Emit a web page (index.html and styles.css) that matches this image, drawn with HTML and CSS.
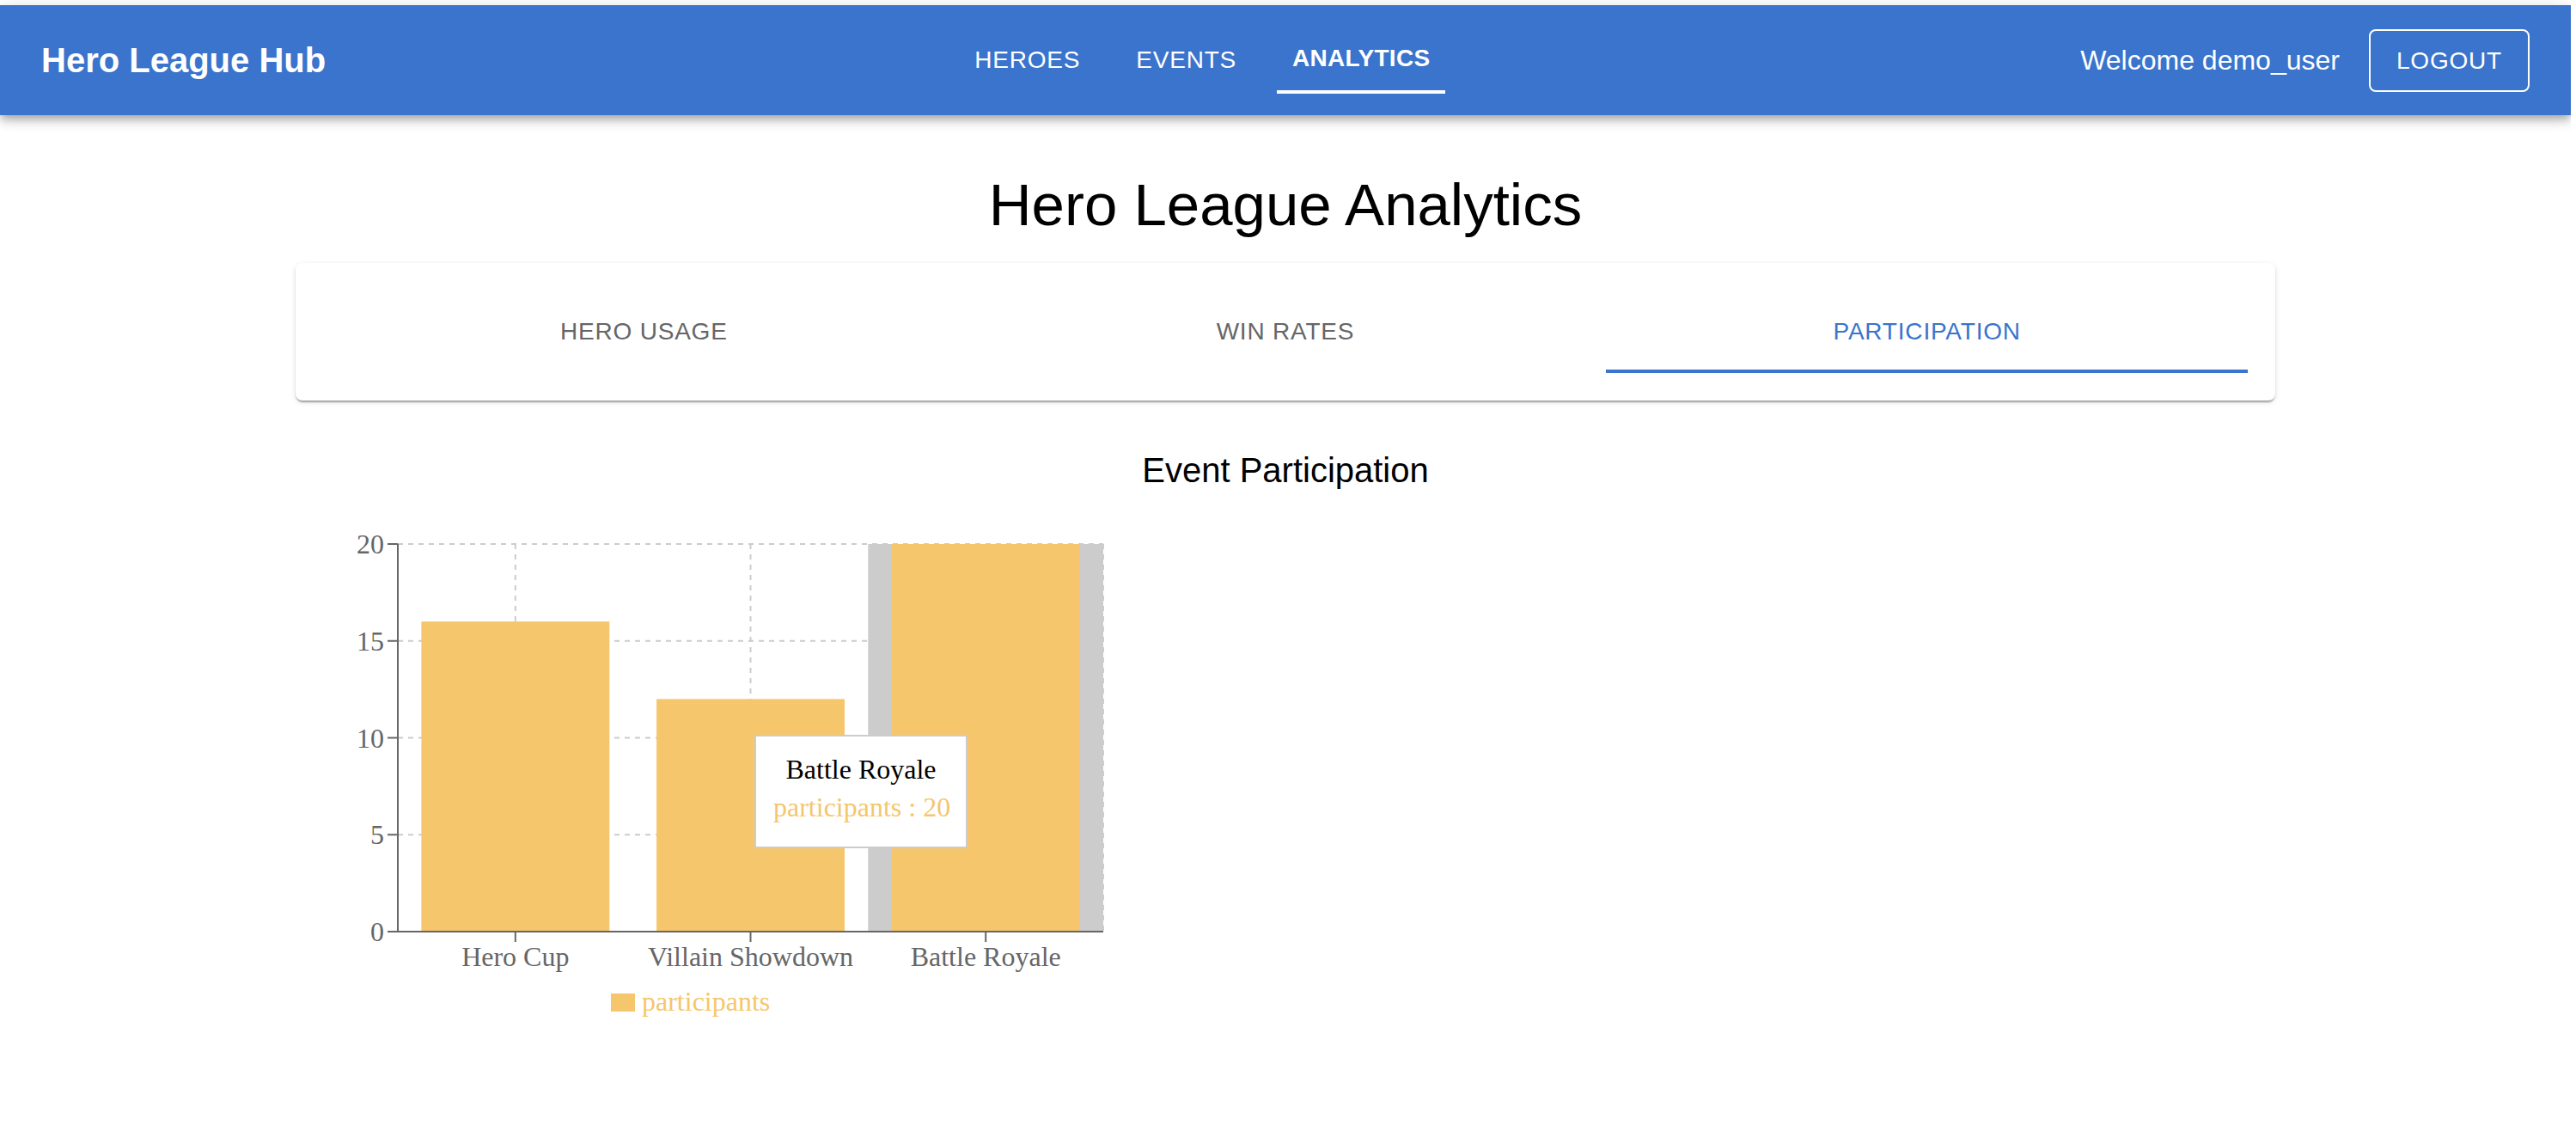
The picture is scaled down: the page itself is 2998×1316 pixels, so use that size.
FILE: index.html
```html
<!DOCTYPE html>
<html lang="en">
<head>
<meta charset="utf-8">
<title>Hero League Hub</title>
<link rel="stylesheet" href="styles.css">
</head>
<body>
<header class="appbar">
  <div class="brand">Hero League Hub</div>
  <nav class="nav">
    <a class="nav-item">HEROES</a>
    <a class="nav-item">EVENTS</a>
    <a class="nav-item active">ANALYTICS</a>
  </nav>
  <div class="spacer"></div>
  <span class="welcome">Welcome demo_user</span>
  <button class="logout">LOGOUT</button>
</header>

<main class="container">
  <h1 class="title">Hero League Analytics</h1>
  <div class="tabs-card">
    <div class="tabs">
      <div class="tab">HERO USAGE</div>
      <div class="tab">WIN RATES</div>
      <div class="tab active">PARTICIPATION</div>
    </div>
  </div>

  <h2 class="chart-title">Event Participation</h2>

  <div class="chart">
    <svg class="chart-svg" width="960" height="600" viewBox="0 0 960 600">
      <g class="grid">
        <line x1="119" y1="31" x2="940" y2="31"/>
        <line x1="119" y1="143.75" x2="940" y2="143.75"/>
        <line x1="119" y1="256.5" x2="940" y2="256.5"/>
        <line x1="119" y1="369.25" x2="940" y2="369.25"/>
        <line x1="255.8" y1="31" x2="255.8" y2="482"/>
        <line x1="529.5" y1="31" x2="529.5" y2="482"/>
        <line x1="803.2" y1="31" x2="803.2" y2="482"/>
      </g>
      <rect class="cursor" x="666.3" y="31" width="273.7" height="451"/>
      <g class="grid">
        <line x1="940" y1="31" x2="940" y2="482"/>
      </g>
      <g class="bars">
        <rect x="146.4" y="121.2" width="218.9" height="360.8"/>
        <rect x="420.1" y="211.4" width="218.9" height="270.6"/>
        <rect x="693.7" y="31" width="218.9" height="451"/>
      </g>
      <g class="axis">
        <line x1="119" y1="31" x2="119" y2="483"/>
        <line x1="118" y1="482" x2="940" y2="482"/>
        <line x1="107" y1="31" x2="119" y2="31"/>
        <line x1="107" y1="143.75" x2="119" y2="143.75"/>
        <line x1="107" y1="256.5" x2="119" y2="256.5"/>
        <line x1="107" y1="369.25" x2="119" y2="369.25"/>
        <line x1="107" y1="482" x2="119" y2="482"/>
        <line x1="255.8" y1="482" x2="255.8" y2="494"/>
        <line x1="529.5" y1="482" x2="529.5" y2="494"/>
        <line x1="803.2" y1="482" x2="803.2" y2="494"/>
      </g>
      <g class="ticks ticks-y">
        <text x="103" y="42">20</text>
        <text x="103" y="155">15</text>
        <text x="103" y="268">10</text>
        <text x="103" y="380">5</text>
        <text x="103" y="493">0</text>
      </g>
      <g class="ticks ticks-x">
        <text x="255.8" y="522">Hero Cup</text>
        <text x="529.5" y="522">Villain Showdown</text>
        <text x="803.2" y="522">Battle Royale</text>
      </g>
      <g class="legend">
        <rect x="367" y="554" width="28" height="21"/>
        <text x="403" y="574">participants</text>
      </g>
    </svg>
    <div class="tooltip">
      <p class="tooltip-label">Battle Royale</p>
      <p class="tooltip-item">participants : 20</p>
    </div>
  </div>
</main>
</body>
</html>
```

FILE: styles.css
```css
html, body {
  margin: 0;
  padding: 0;
  background: #ffffff;
}

body {
  padding-top: 6px;
  width: 2992px;
  font-family: "Liberation Sans", Arial, sans-serif;
  color: #000;
}

.appbar {
  height: 128px;
  box-sizing: border-box;
  padding: 0 48px;
  background: #3a74cc;
  color: #ffffff;
  display: flex;
  align-items: center;
  box-shadow: 0 4px 8px -2px rgba(0,0,0,0.2), 0 8px 10px 0 rgba(0,0,0,0.14), 0 2px 20px 0 rgba(0,0,0,0.12);
  position: relative;
  z-index: 2;
}

.brand {
  font-size: 40px;
  font-weight: 700;
  line-height: 1.6;
  white-space: nowrap;
}

.nav {
  display: flex;
  gap: 29px;
  margin-left: 737px;
}

.nav-item {
  position: relative;
  height: 78px;
  padding: 0 18px;
  display: flex;
  align-items: center;
  font-size: 28px;
  letter-spacing: 0.8px;
  color: #ffffff;
  white-space: nowrap;
}

.nav-item.active {
  font-weight: 700;
  letter-spacing: 0.3px;
  padding-bottom: 4px;
  height: 74px;
}

.nav-item.active::after {
  content: "";
  position: absolute;
  left: 0;
  right: 0;
  bottom: 0;
  height: 4px;
  background: #ffffff;
}

.spacer {
  flex: 1;
}

.welcome {
  font-size: 32px;
  line-height: 1.5;
  margin-right: 34px;
  white-space: nowrap;
}

.logout {
  font-family: "Liberation Sans", Arial, sans-serif;
  font-size: 28px;
  line-height: 49px;
  letter-spacing: 0.8px;
  color: #ffffff;
  background: transparent;
  border: 2px solid #ffffff;
  border-radius: 8px;
  padding: 10px 30px;
  height: 73px;
  box-sizing: border-box;
}

.container {
  width: 2304px;
  margin: 0 auto;
}

.title {
  margin: 63px 0 25px;
  font-size: 69px;
  line-height: 84px;
  font-weight: 400;
  text-align: center;
}

.tabs-card {
  height: 160px;
  box-sizing: border-box;
  padding: 32px;
  background: #ffffff;
  border-radius: 8px;
  box-shadow: 0 4px 2px -2px rgba(0,0,0,0.2), 0 2px 2px 0 rgba(0,0,0,0.14), 0 2px 6px 0 rgba(0,0,0,0.12);
}

.tabs {
  display: grid;
  grid-template-columns: 1fr 1fr 1fr;
  height: 96px;
}

.tab {
  position: relative;
  display: flex;
  align-items: center;
  justify-content: center;
  font-size: 28px;
  letter-spacing: 0.8px;
  color: #666666;
}

.tab.active {
  color: #3a74cc;
}

.tab.active::after {
  content: "";
  position: absolute;
  left: 0;
  right: 0;
  bottom: 0;
  height: 4px;
  background: #3a74cc;
}

.chart-title {
  margin: 49px 0 0;
  font-size: 40px;
  line-height: 64px;
  font-weight: 400;
  text-align: center;
}

.chart {
  position: relative;
  width: 960px;
  height: 600px;
  margin-top: 23px;
}

.chart-svg {
  display: block;
  font-family: "Liberation Serif", "Times New Roman", serif;
  font-size: 32px;
}

.grid line {
  stroke: #cccccc;
  stroke-width: 2;
  stroke-dasharray: 6 6;
}

.cursor {
  fill: #cccccc;
}

.bars rect {
  fill: #f5c66b;
}

.axis line {
  stroke: #666666;
  stroke-width: 2;
}

.ticks text {
  fill: #666666;
}

.ticks-y text {
  text-anchor: end;
}

.ticks-x text {
  text-anchor: middle;
}

.legend rect {
  fill: #f5c66b;
}

.legend text {
  fill: #f5c66b;
}

.tooltip {
  position: absolute;
  left: 534px;
  top: 253px;
  width: 248px;
  box-sizing: border-box;
  padding: 20px;
  background: #ffffff;
  border: 2px solid #cccccc;
  text-align: center;
  font-family: "Liberation Serif", "Times New Roman", serif;
  font-size: 32px;
  white-space: nowrap;
}

.tooltip-label {
  margin: 0;
  line-height: 36px;
  color: #000000;
}

.tooltip-item {
  margin: 0;
  padding: 8px 0;
  line-height: 36px;
  color: #f5c66b;
}
```
